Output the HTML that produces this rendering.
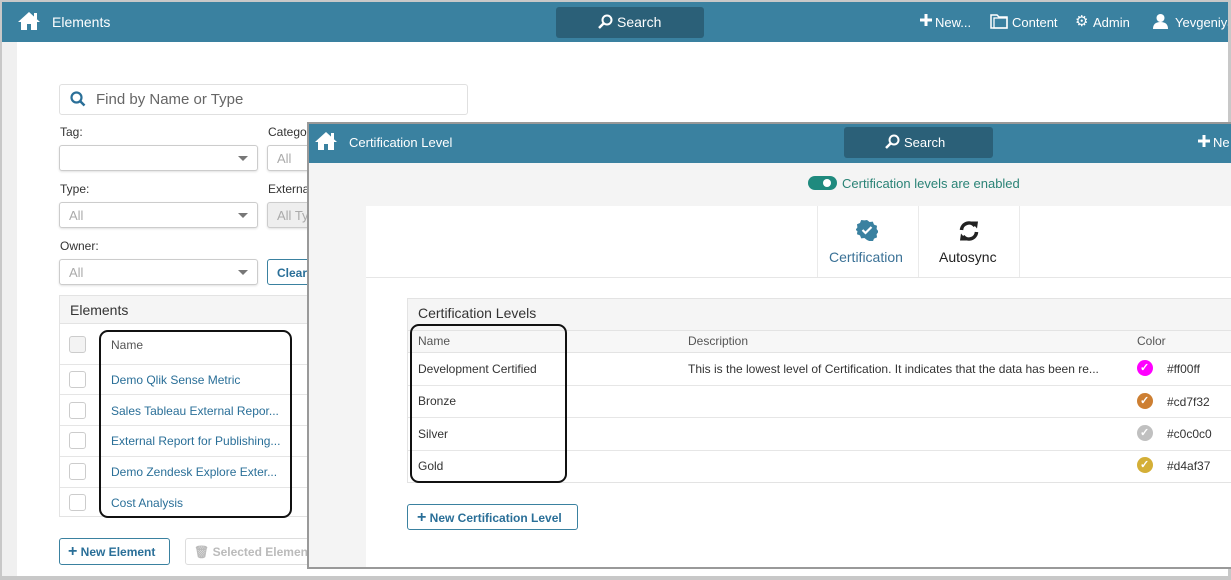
<!DOCTYPE html>
<html><head><meta charset="utf-8"><style>
*{box-sizing:border-box;margin:0;padding:0}
body{width:1231px;height:580px;overflow:hidden;background:#c8c8c8;font-family:"Liberation Sans",sans-serif;font-size:12px;color:#333;position:relative}
.a{position:absolute;white-space:nowrap}
.bar{background:#3a81a0;color:#fff}
.sel{position:absolute;border:1px solid #ccc;border-radius:3px;background:#fff;box-shadow:0 1px 2px rgba(0,0,0,.12);color:#aaa;font-size:13px;padding:5px 9px;white-space:nowrap;overflow:hidden}
.sel:after{content:"";position:absolute;right:9px;top:10px;border:5px solid transparent;border-top:5px solid #777}
.lbl{position:absolute;font-size:12px;color:#333;white-space:nowrap}
.cb{position:absolute;width:17px;height:17px;border:1px solid #ccc;border-radius:3px;background:#fff}
.lnk{position:absolute;left:111px;color:#2a6f98;font-size:12px;white-space:nowrap}
.rowl{position:absolute;left:60px;width:250px;height:1px;background:#e5e5e5}
.btn{position:absolute;border:1px solid #3a81a0;border-radius:3px;background:#fff;color:#2a6f98;font-weight:bold;font-size:12px;white-space:nowrap;overflow:hidden}
.badge{position:absolute;width:16px;height:16px;border-radius:50%}
.badge:after{content:"✓";position:absolute;left:3px;top:0;color:#fff;font-size:11px;font-weight:bold;line-height:16px}
</style></head><body>
<div class="a" style="left:2px;top:2px;width:1226px;height:574px;background:#fff"></div>
<div class="a" style="left:2px;top:42px;width:15px;height:534px;background:#f0f0f0"></div>
<div class="a bar" style="left:2px;top:2px;width:1226px;height:40px"></div>
<svg class="a" style="left:17px;top:11px" width="24" height="20" viewBox="0 0 24 20"><path d="M12 1 L1 11 L4 11 L4 19 L10 19 L10 13 L14 13 L14 19 L20 19 L20 11 L23 11 Z" fill="#fff"/><rect x="17" y="2" width="3" height="6" fill="#fff"/></svg>
<div class="a" style="left:52px;top:14px;color:#fff;font-size:14px">Elements</div>
<div class="a" style="left:556px;top:7px;width:148px;height:31px;background:#2b6078;border-radius:3px"></div>
<svg class="a" style="left:597px;top:14px" width="16" height="16"><circle cx="10" cy="6" r="4.5" stroke="#fff" stroke-width="2" fill="none"/><line x1="7" y1="9" x2="2" y2="14" stroke="#fff" stroke-width="2.5"/></svg>
<div class="a" style="left:617px;top:14px;color:#fff;font-size:14px">Search</div>
<svg class="a" style="left:920px;top:14px" width="12" height="12"><path d="M6 0v12M0 6h12" stroke="#fff" stroke-width="3"/></svg>
<div class="a" style="left:935px;top:15px;color:#fff;font-size:13px">New...</div>
<svg class="a" style="left:990px;top:13px" width="18" height="16"><path d="M1 2h6l2 2h8v11H1z" stroke="#fff" stroke-width="1.5" fill="none"/><rect x="4" y="5" width="13" height="10" stroke="#fff" stroke-width="1.3" fill="none"/></svg>
<div class="a" style="left:1012px;top:15px;color:#fff;font-size:13px">Content</div>
<div class="a" style="left:1075px;top:12px;color:#fff;font-size:15px">⚙</div>
<div class="a" style="left:1093px;top:15px;color:#fff;font-size:13px">Admin</div>
<svg class="a" style="left:1153px;top:13px" width="15" height="16"><circle cx="7.5" cy="5" r="4" fill="#fff"/><path d="M0 16 Q0 9 7.5 9 Q15 9 15 16z" fill="#fff"/></svg>
<div class="a" style="left:1175px;top:15px;color:#fff;font-size:13px;width:53px;overflow:hidden">Yevgeniya</div>

<div class="a" style="left:59px;top:84px;width:409px;height:31px;border:1px solid #e0e0e0;border-radius:3px"></div>
<svg class="a" style="left:70px;top:91px" width="16" height="16"><circle cx="6.5" cy="6.5" r="5" stroke="#2a6f98" stroke-width="2.2" fill="none"/><line x1="10" y1="10" x2="14.5" y2="14.5" stroke="#2a6f98" stroke-width="2.5"/></svg>
<div class="a" style="left:96px;top:91px;font-size:15px;color:#666">Find by Name or Type</div>
<div class="lbl" style="left:60px;top:125px">Tag:</div>
<div class="sel" style="left:59px;top:145px;width:199px;height:26px"></div>
<div class="lbl" style="left:268px;top:125px">Category</div>
<div class="sel" style="left:267px;top:145px;width:60px;height:26px">All</div>
<div class="lbl" style="left:60px;top:182px">Type:</div>
<div class="sel" style="left:59px;top:202px;width:199px;height:26px">All</div>
<div class="lbl" style="left:268px;top:182px">External</div>
<div class="sel" style="left:267px;top:202px;width:60px;height:26px;background:#eee">All Ty</div>
<div class="lbl" style="left:60px;top:239px">Owner:</div>
<div class="sel" style="left:59px;top:259px;width:199px;height:26px">All</div>
<div class="btn" style="left:267px;top:259px;width:60px;height:26px;padding:6px 9px">Clear</div>

<div class="a" style="left:59px;top:295px;width:260px;height:222px;border:1px solid #e3e3e3"></div>
<div class="a" style="left:60px;top:296px;width:259px;height:28px;background:#f5f5f5;border-bottom:1px solid #e3e3e3"></div>
<div class="a" style="left:70px;top:302px;font-size:14px;color:#333">Elements</div>
<div class="cb" style="left:69px;top:336px;background:#f3f3f3"></div>
<div class="a" style="left:111px;top:338px;color:#555">Name</div>
<div class="rowl" style="top:364px"></div><div class="rowl" style="top:394px"></div><div class="rowl" style="top:425px"></div><div class="rowl" style="top:456px"></div><div class="rowl" style="top:487px"></div>
<div class="cb" style="left:69px;top:371px"></div><div class="lnk" style="top:373px">Demo Qlik Sense Metric</div>
<div class="cb" style="left:69px;top:402px"></div><div class="lnk" style="top:404px">Sales Tableau External Repor...</div>
<div class="cb" style="left:69px;top:432px"></div><div class="lnk" style="top:434px">External Report for Publishing...</div>
<div class="cb" style="left:69px;top:463px"></div><div class="lnk" style="top:465px">Demo Zendesk Explore Exter...</div>
<div class="cb" style="left:69px;top:494px"></div><div class="lnk" style="top:496px">Cost Analysis</div>
<div class="a" style="left:99px;top:330px;width:193px;height:188px;border:2px solid #111;border-radius:9px"></div>
<div class="btn" style="left:59px;top:538px;width:111px;height:27px;padding:6px 8px"><span style="font-size:16px;line-height:10px">+</span> New Element</div>
<div class="btn" style="left:185px;top:538px;width:140px;height:27px;padding:6px 8px;border-color:#ddd;color:#bbb">🗑 Selected Elements</div>

<div class="a" style="left:307px;top:122px;width:924px;height:447px;background:#f4f4f4;border:2px solid #999;border-right:none"></div>
<div class="a bar" style="left:309px;top:124px;width:922px;height:39px"></div>
<svg class="a" style="left:314px;top:131px" width="24" height="20" viewBox="0 0 24 20"><path d="M12 1 L1 11 L4 11 L4 19 L10 19 L10 13 L14 13 L14 19 L20 19 L20 11 L23 11 Z" fill="#fff"/><rect x="17" y="2" width="3" height="6" fill="#fff"/></svg>
<div class="a" style="left:349px;top:135px;color:#fff;font-size:13px">Certification Level</div>
<div class="a" style="left:844px;top:127px;width:149px;height:31px;background:#2b6078;border-radius:3px"></div>
<svg class="a" style="left:884px;top:134px" width="16" height="16"><circle cx="10" cy="6" r="4.5" stroke="#fff" stroke-width="2" fill="none"/><line x1="7" y1="9" x2="2" y2="14" stroke="#fff" stroke-width="2.5"/></svg>
<div class="a" style="left:904px;top:135px;color:#fff;font-size:13px">Search</div>
<svg class="a" style="left:1198px;top:135px" width="12" height="12"><path d="M6 0v12M0 6h12" stroke="#fff" stroke-width="3"/></svg>
<div class="a" style="left:1213px;top:135px;color:#fff;font-size:13px">Ne</div>
<div class="a" style="left:808px;top:176px;width:29px;height:14px;border-radius:7px;background:#1f8a7e"></div>
<div class="a" style="left:823px;top:179px;width:8px;height:8px;border-radius:50%;background:#fff"></div>
<div class="a" style="left:842px;top:176px;color:#2a8376;font-size:13px">Certification levels are enabled</div>

<div class="a" style="left:366px;top:206px;width:865px;height:361px;background:#fff"></div>
<div class="a" style="left:366px;top:277px;width:865px;height:1px;background:#e6e6e6"></div>
<div class="a" style="left:817px;top:206px;width:1px;height:71px;background:#eaeaea"></div>
<div class="a" style="left:918px;top:206px;width:1px;height:71px;background:#eaeaea"></div>
<div class="a" style="left:1019px;top:206px;width:1px;height:71px;background:#eaeaea"></div>
<svg class="a" style="left:856px;top:219px" width="22" height="22" viewBox="0 0 22 22"><path d="M11 1l2.6 2 3.2-.4 1.2 3 3 1.2-.4 3.2 2 2.6-2 2.6.4 3.2-3 1.2-1.2 3-3.2-.4L11 21l-2.6-2-3.2.4-1.2-3-3-1.2.4-3.2L-.6 11 1.4 8.4 1 5.2l3-1.2 1.2-3 3.2.4z" fill="#3a81a0"/><path d="M6.5 11l3 3 6-6" stroke="#fff" stroke-width="2.2" fill="none"/></svg>
<div class="a" style="left:829px;top:249px;color:#3a7196;font-size:14px">Certification</div>
<svg class="a" style="left:958px;top:220px" width="22" height="22" viewBox="0 0 22 22"><path d="M3.5 10a7.5 7.5 0 0 1 13.5-4" stroke="#222" stroke-width="3.5" fill="none"/><path d="M13 1.5l7 0-1 7z" fill="#222"/><path d="M18.5 12a7.5 7.5 0 0 1-13.5 4" stroke="#222" stroke-width="3.5" fill="none"/><path d="M9 20.5l-7 0 1-7z" fill="#222"/></svg>
<div class="a" style="left:939px;top:249px;color:#222;font-size:14px">Autosync</div>

<div class="a" style="left:407px;top:298px;width:824px;height:185px;border:1px solid #e3e3e3;border-right:none"></div>
<div class="a" style="left:408px;top:299px;width:823px;height:31px;background:#f5f5f5"></div>
<div class="a" style="left:418px;top:305px;font-size:14px;color:#333">Certification Levels</div>
<div class="a" style="left:408px;top:330px;width:823px;height:23px;background:#f7f7f7;border-top:1px solid #e3e3e3;border-bottom:1px solid #e3e3e3"></div>
<div class="a" style="left:418px;top:334px;color:#555">Name</div>
<div class="a" style="left:688px;top:334px;color:#555">Description</div>
<div class="a" style="left:1137px;top:334px;color:#555">Color</div>
<div class="a" style="left:408px;top:385px;width:823px;height:1px;background:#e6e6e6"></div>
<div class="a" style="left:408px;top:417px;width:823px;height:1px;background:#e6e6e6"></div>
<div class="a" style="left:408px;top:450px;width:823px;height:1px;background:#e6e6e6"></div>
<div class="a" style="left:418px;top:362px">Development Certified</div>
<div class="a" style="left:688px;top:362px">This is the lowest level of Certification. It indicates that the data has been re...</div>
<div class="badge" style="left:1137px;top:360px;background:#ff00ff"></div><div class="a" style="left:1167px;top:362px">#ff00ff</div>
<div class="a" style="left:418px;top:394px">Bronze</div>
<div class="badge" style="left:1137px;top:393px;background:#cd7f32"></div><div class="a" style="left:1167px;top:395px">#cd7f32</div>
<div class="a" style="left:418px;top:427px">Silver</div>
<div class="badge" style="left:1137px;top:425px;background:#c0c0c0"></div><div class="a" style="left:1167px;top:427px">#c0c0c0</div>
<div class="a" style="left:418px;top:459px">Gold</div>
<div class="badge" style="left:1137px;top:457px;background:#d4af37"></div><div class="a" style="left:1167px;top:459px">#d4af37</div>
<div class="a" style="left:410px;top:324px;width:157px;height:159px;border:2px solid #111;border-radius:9px"></div>
<div class="btn" style="left:407px;top:504px;width:171px;height:26px;padding:6px 9px"><span style="font-size:16px;line-height:10px">+</span> New Certification Level</div>
</body></html>
